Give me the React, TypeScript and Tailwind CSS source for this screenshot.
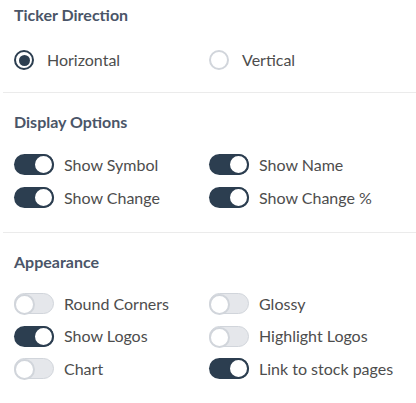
import { useState } from "react";

function Toggle({ on, label }: { on: boolean; label: string }) {
  return (
    <label className="flex items-center gap-[10px] cursor-pointer">
      <span
        className={`relative inline-flex h-[21px] w-[40px] shrink-0 rounded-full ${on ? "bg-[#2c3e50]" : "bg-[#e5e7eb] border border-[#d1d5db]"}`}
      >
        <span
          className={`absolute top-0 h-[21px] w-[21px] rounded-full bg-white border-2 ${on ? "right-0 border-[#2c3e50]" : "-left-px -top-px border-[#d1d5db]"}`}
        />
      </span>
      <span className="text-[16px] leading-5 text-[#4d4d4d]">{label}</span>
    </label>
  );
}

function Radio({ checked, label }: { checked: boolean; label: string }) {
  return (
    <label className="flex items-center gap-[13px] cursor-pointer">
      <span
        className={`flex h-5 w-5 items-center justify-center rounded-full border-2 bg-white ${checked ? "border-[#2c3e50]" : "border-[#d1d5db]"}`}
      >
        {checked && <span className="h-[11px] w-[11px] rounded-full bg-[#2c3e50]" />}
      </span>
      <span className="text-[16px] leading-5 text-[#4d4d4d]">{label}</span>
    </label>
  );
}

export default function App() {
  const [dir] = useState("horizontal");

  return (
    <div className="w-[416px] h-[403px] bg-white overflow-hidden font-['Lato',sans-serif]">
      {/* ticker direction */}
      <div className="px-[14px] pt-[5px] pb-[22px]">
        <h3 className="text-[16px] leading-5 font-bold text-[#4a5568]">Ticker Direction</h3>
        <div className="mt-[25px] grid grid-cols-2">
          <Radio checked={dir === "horizontal"} label="Horizontal" />
          <div className="pl-[1px]">
            <Radio checked={dir === "vertical"} label="Vertical" />
          </div>
        </div>
      </div>
      <div className="ml-[3px] h-px bg-[#ebebeb]" />

      {/* display options */}
      <div className="px-[14px] pt-[19px] pb-[24px]">
        <h3 className="text-[16px] leading-5 font-bold text-[#4a5568]">Display Options</h3>
        <div className="mt-[22px] grid grid-cols-2 gap-y-[12px]">
          <Toggle on label="Show Symbol" />
          <div className="pl-[1px]"><Toggle on label="Show Name" /></div>
          <Toggle on label="Show Change" />
          <div className="pl-[1px]"><Toggle on label="Show Change %" /></div>
        </div>
      </div>
      <div className="ml-[3px] h-px bg-[#ebebeb]" />

      {/* appearance */}
      <div className="px-[14px] pt-[19px]">
        <h3 className="text-[16px] leading-5 font-bold text-[#4a5568]">Appearance</h3>
        <div className="mt-[21px] grid grid-cols-2 gap-y-[11.5px]">
          <Toggle on={false} label="Round Corners" />
          <div className="pl-[1px]"><Toggle on={false} label="Glossy" /></div>
          <Toggle on label="Show Logos" />
          <div className="pl-[1px]"><Toggle on={false} label="Highlight Logos" /></div>
          <Toggle on={false} label="Chart" />
          <div className="pl-[1px]"><Toggle on label="Link to stock pages" /></div>
        </div>
      </div>
    </div>
  );
}
